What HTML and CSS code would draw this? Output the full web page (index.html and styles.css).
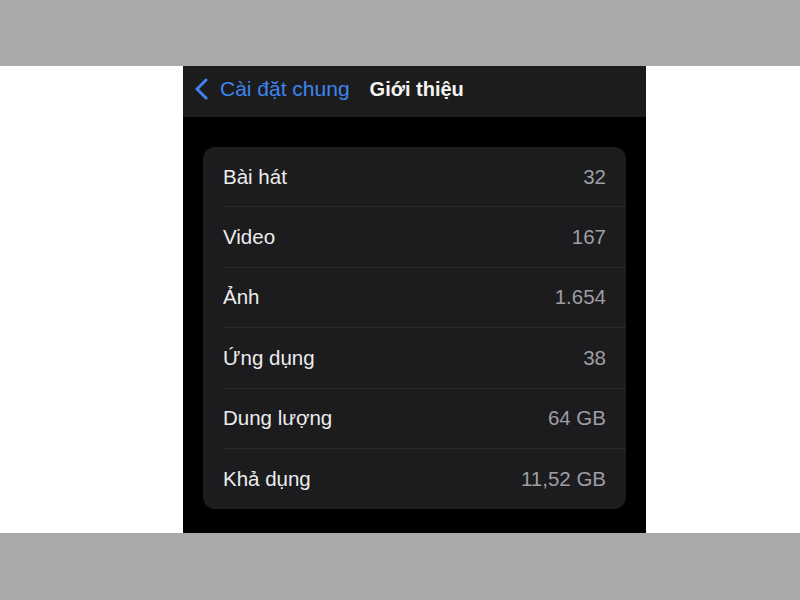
FILE: index.html
```html
<!DOCTYPE html>
<html lang="vi">
<head>
    <meta charset="UTF-8">
    <meta name="viewport" content="width=device-width, initial-scale=1.0">
    <title>Giới thiệu</title>
    <link rel="stylesheet" href="styles.css">
</head>
<body>
    <div class="band"></div>

    <div class="stage">
        <div class="phone">
            <div class="nav">
                <a class="back" href="#">
                    <svg class="chevron" width="14" height="22" viewBox="0 0 14 22">
                        <path d="M12 2 L3 11 L12 20" fill="none" stroke="#3d84f0" stroke-width="3" stroke-linecap="round" stroke-linejoin="round"/>
                    </svg>
                    <span>Cài đặt chung</span>
                </a>
                <span class="title">Giới thiệu</span>
            </div>

            <div class="group">
                <div class="row"><span class="label">Bài hát</span><span class="value">32</span></div>
                <div class="row"><span class="label">Video</span><span class="value">167</span></div>
                <div class="row"><span class="label">Ảnh</span><span class="value">1.654</span></div>
                <div class="row"><span class="label">Ứng dụng</span><span class="value">38</span></div>
                <div class="row"><span class="label">Dung lượng</span><span class="value">64 GB</span></div>
                <div class="row"><span class="label">Khả dụng</span><span class="value">11,52 GB</span></div>
            </div>
        </div>
    </div>

    <div class="band band-bottom"></div>
</body>
</html>
```

FILE: styles.css
```css
body {
    margin: 0;
    background-color: #ffffff;
    font-family: 'Liberation Sans', Arial, sans-serif;
}

.band {
    height: 66px;
    background-color: #a9a9a9;
}

.band-bottom {
    height: 67px;
}

.stage {
    padding-left: 183px;
}

.phone {
    width: 463px;
    height: 467px;
    background-color: #000000;
    padding: 0 20px;
    box-sizing: border-box;
}

.nav {
    height: 51px;
    margin: 0 -20px;
    padding-left: 11px;
    padding-bottom: 5px;
    box-sizing: border-box;
    display: flex;
    align-items: center;
    background-color: #1c1c1d;
}

.back {
    display: flex;
    align-items: center;
    gap: 12px;
    color: #3d84f0;
    text-decoration: none;
    font-size: 21px;
}

.chevron {
    flex-shrink: 0;
}

.title {
    margin-left: 20px;
    color: #f4f4f4;
    font-size: 20px;
    font-weight: bold;
}

.group {
    margin-top: 30px;
    background-color: #1c1c1e;
    border-radius: 12px;
    overflow: hidden;
}

.row {
    height: 59.4px;
    margin-left: 20px;
    padding-right: 20px;
    display: flex;
    align-items: center;
    justify-content: space-between;
    border-bottom: 1px solid #2b2b2d;
    font-size: 20.5px;
}

.row:last-child {
    border-bottom: none;
    height: 60.4px;
}

.label {
    color: #ececec;
}

.value {
    color: #9e9ea3;
}
```
